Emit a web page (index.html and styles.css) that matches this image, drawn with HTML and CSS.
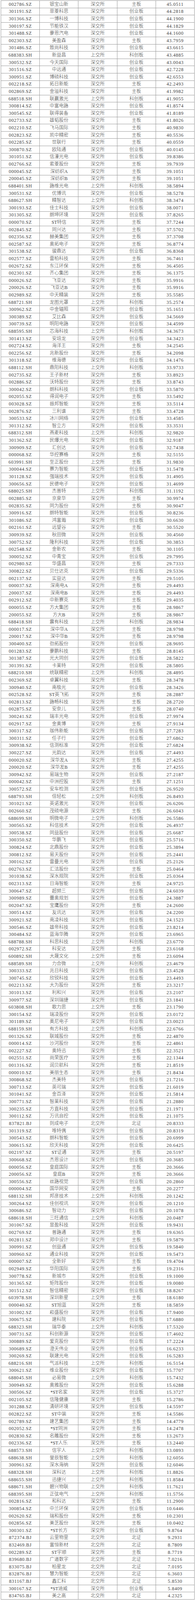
FILE: index.html
```html
<!DOCTYPE html>
<html lang="zh-CN">
<head>
<meta charset="utf-8">
<meta name="viewport" content="width=device-width, initial-scale=1">
<title>股票列表</title>
<link rel="stylesheet" href="styles.css">
</head>
<body>
<div class="sheet">
<div class="row"><span class="cell code">002786.SZ</span><span class="cell name">银宝山新</span><span class="cell cn">深交所</span><span class="cell cn">主板</span><span class="cell num">45.0511</span></div>
<div class="row"><span class="cell code">301191.SZ</span><span class="cell name">菲菱科思</span><span class="cell cn">深交所</span><span class="cell cn">创业板</span><span class="cell num">44.2818</span></div>
<div class="row"><span class="cell code">301366.SZ</span><span class="cell name">一博科技</span><span class="cell cn">深交所</span><span class="cell cn">创业板</span><span class="cell num">44.1900</span></div>
<div class="row"><span class="cell code">300197.SZ</span><span class="cell name">节能铁汉</span><span class="cell cn">深交所</span><span class="cell cn">创业板</span><span class="cell num">44.1829</span></div>
<div class="row"><span class="cell code">301488.SZ</span><span class="cell name">豪恩汽电</span><span class="cell cn">深交所</span><span class="cell cn">创业板</span><span class="cell num">44.1600</span></div>
<div class="row"><span class="cell code">002303.SZ</span><span class="cell name">美盈森</span><span class="cell cn">深交所</span><span class="cell cn">主板</span><span class="cell num">43.7959</span></div>
<div class="row"><span class="cell code">301486.SZ</span><span class="cell name">致尚科技</span><span class="cell cn">深交所</span><span class="cell cn">创业板</span><span class="cell num">43.6615</span></div>
<div class="row"><span class="cell code">688383.SH</span><span class="cell name">新益昌</span><span class="cell cn">上交所</span><span class="cell cn">科创板</span><span class="cell num">43.4885</span></div>
<div class="row"><span class="cell code">300532.SZ</span><span class="cell name">今天国际</span><span class="cell cn">深交所</span><span class="cell cn">创业板</span><span class="cell num">43.0043</span></div>
<div class="row"><span class="cell code">301516.SZ</span><span class="cell name">中远通</span><span class="cell cn">深交所</span><span class="cell cn">创业板</span><span class="cell num">42.7228</span></div>
<div class="row"><span class="cell code">300951.SZ</span><span class="cell name">博硕科技</span><span class="cell cn">深交所</span><span class="cell cn">创业板</span><span class="cell num">42.6553</span></div>
<div class="row"><span class="cell code">002218.SZ</span><span class="cell name">拓日新能</span><span class="cell cn">深交所</span><span class="cell cn">主板</span><span class="cell num">42.2493</span></div>
<div class="row"><span class="cell code">002869.SZ</span><span class="cell name">金溢科技</span><span class="cell cn">深交所</span><span class="cell cn">主板</span><span class="cell num">41.9982</span></div>
<div class="row"><span class="cell code">688518.SH</span><span class="cell name">联赢激光</span><span class="cell cn">上交所</span><span class="cell cn">科创板</span><span class="cell num">41.9055</span></div>
<div class="row"><span class="cell code">300814.SZ</span><span class="cell name">中富电路</span><span class="cell cn">深交所</span><span class="cell cn">创业板</span><span class="cell num">41.8574</span></div>
<div class="row"><span class="cell code">300545.SZ</span><span class="cell name">联得装备</span><span class="cell cn">深交所</span><span class="cell cn">创业板</span><span class="cell num">41.8189</span></div>
<div class="row"><span class="cell code">002733.SZ</span><span class="cell name">雄韬股份</span><span class="cell cn">深交所</span><span class="cell cn">主板</span><span class="cell num">41.8026</span></div>
<div class="row"><span class="cell code">002210.SZ</span><span class="cell name">飞马国际</span><span class="cell cn">深交所</span><span class="cell cn">主板</span><span class="cell num">40.9830</span></div>
<div class="row"><span class="cell code">002823.SZ</span><span class="cell name">凯中精密</span><span class="cell cn">深交所</span><span class="cell cn">主板</span><span class="cell num">40.5536</span></div>
<div class="row"><span class="cell code">002285.SZ</span><span class="cell name">世联行</span><span class="cell cn">深交所</span><span class="cell cn">主板</span><span class="cell num">40.0559</span></div>
<div class="row"><span class="cell code">300870.SZ</span><span class="cell name">欧陆通</span><span class="cell cn">深交所</span><span class="cell cn">创业板</span><span class="cell num">40.0145</span></div>
<div class="row"><span class="cell code">301051.SZ</span><span class="cell name">信濠光电</span><span class="cell cn">深交所</span><span class="cell cn">创业板</span><span class="cell num">39.8386</span></div>
<div class="row"><span class="cell code">002766.SZ</span><span class="cell name">索菱股份</span><span class="cell cn">深交所</span><span class="cell cn">主板</span><span class="cell num">39.7939</span></div>
<div class="row"><span class="cell code">000045.SZ</span><span class="cell name">深纺织A</span><span class="cell cn">深交所</span><span class="cell cn">主板</span><span class="cell num">39.1051</span></div>
<div class="row"><span class="cell code">200045.SZ</span><span class="cell name">深纺织B</span><span class="cell cn">深交所</span><span class="cell cn">主板</span><span class="cell num">39.1051</span></div>
<div class="row"><span class="cell code">688401.SH</span><span class="cell name">路维光电</span><span class="cell cn">上交所</span><span class="cell cn">科创板</span><span class="cell num">38.5894</span></div>
<div class="row"><span class="cell code">300531.SZ</span><span class="cell name">优博讯</span><span class="cell cn">深交所</span><span class="cell cn">创业板</span><span class="cell num">38.5278</span></div>
<div class="row"><span class="cell code">688627.SH</span><span class="cell name">精智达</span><span class="cell cn">上交所</span><span class="cell cn">科创板</span><span class="cell num">38.3474</span></div>
<div class="row"><span class="cell code">300193.SZ</span><span class="cell name">佳士科技</span><span class="cell cn">深交所</span><span class="cell cn">创业板</span><span class="cell num">38.0071</span></div>
<div class="row"><span class="cell code">301305.SZ</span><span class="cell name">朗坤环境</span><span class="cell cn">深交所</span><span class="cell cn">创业板</span><span class="cell num">37.8265</span></div>
<div class="row"><span class="cell code">000070.SZ</span><span class="cell name">ST特信</span><span class="cell cn">深交所</span><span class="cell cn">主板</span><span class="cell num">37.7244</span></div>
<div class="row"><span class="cell code">002845.SZ</span><span class="cell name">同兴达</span><span class="cell cn">深交所</span><span class="cell cn">主板</span><span class="cell num">37.5702</span></div>
<div class="row"><span class="cell code">002356.SZ</span><span class="cell name">赫美集团</span><span class="cell cn">深交所</span><span class="cell cn">主板</span><span class="cell num">37.3708</span></div>
<div class="row"><span class="cell code">002587.SZ</span><span class="cell name">奥拓电子</span><span class="cell cn">深交所</span><span class="cell cn">主板</span><span class="cell num">36.8774</span></div>
<div class="row"><span class="cell code">301538.SZ</span><span class="cell name">骏鼎达</span><span class="cell cn">深交所</span><span class="cell cn">创业板</span><span class="cell num">36.8368</span></div>
<div class="row"><span class="cell code">002577.SZ</span><span class="cell name">雷柏科技</span><span class="cell cn">深交所</span><span class="cell cn">主板</span><span class="cell num">36.7461</span></div>
<div class="row"><span class="cell code">002672.SZ</span><span class="cell name">东江环保</span><span class="cell cn">深交所</span><span class="cell cn">主板</span><span class="cell num">36.4505</span></div>
<div class="row"><span class="cell code">002301.SZ</span><span class="cell name">齐心集团</span><span class="cell cn">深交所</span><span class="cell cn">主板</span><span class="cell num">36.1375</span></div>
<div class="row"><span class="cell code">000026.SZ</span><span class="cell name">飞亚达</span><span class="cell cn">深交所</span><span class="cell cn">主板</span><span class="cell num">35.9916</span></div>
<div class="row"><span class="cell code">200026.SZ</span><span class="cell name">飞亚达B</span><span class="cell cn">深交所</span><span class="cell cn">主板</span><span class="cell num">35.9916</span></div>
<div class="row"><span class="cell code">002989.SZ</span><span class="cell name">中天精装</span><span class="cell cn">深交所</span><span class="cell cn">主板</span><span class="cell num">35.5585</span></div>
<div class="row"><span class="cell code">688721.SH</span><span class="cell name">龙图光罩</span><span class="cell cn">上交所</span><span class="cell cn">科创板</span><span class="cell num">35.2574</span></div>
<div class="row"><span class="cell code">300962.SZ</span><span class="cell name">中金辐照</span><span class="cell cn">深交所</span><span class="cell cn">创业板</span><span class="cell num">35.1651</span></div>
<div class="row"><span class="cell code">300389.SZ</span><span class="cell name">艾比森</span><span class="cell cn">深交所</span><span class="cell cn">创业板</span><span class="cell num">34.5669</span></div>
<div class="row"><span class="cell code">300739.SZ</span><span class="cell name">明阳电路</span><span class="cell cn">深交所</span><span class="cell cn">创业板</span><span class="cell num">34.4599</span></div>
<div class="row"><span class="cell code">688595.SH</span><span class="cell name">芯海科技</span><span class="cell cn">上交所</span><span class="cell cn">科创板</span><span class="cell num">34.3673</span></div>
<div class="row"><span class="cell code">301413.SZ</span><span class="cell name">安培龙</span><span class="cell cn">深交所</span><span class="cell cn">创业板</span><span class="cell num">34.3423</span></div>
<div class="row"><span class="cell code">002724.SZ</span><span class="cell name">海洋王</span><span class="cell cn">深交所</span><span class="cell cn">主板</span><span class="cell num">34.2545</span></div>
<div class="row"><span class="cell code">002256.SZ</span><span class="cell name">兆新股份</span><span class="cell cn">深交所</span><span class="cell cn">主板</span><span class="cell num">34.2098</span></div>
<div class="row"><span class="cell code">301318.SZ</span><span class="cell name">维海德</span><span class="cell cn">深交所</span><span class="cell cn">创业板</span><span class="cell num">34.1476</span></div>
<div class="row"><span class="cell code">688112.SH</span><span class="cell name">鼎阳科技</span><span class="cell cn">上交所</span><span class="cell cn">科创板</span><span class="cell num">33.9733</span></div>
<div class="row"><span class="cell code">002735.SZ</span><span class="cell name">王子新材</span><span class="cell cn">深交所</span><span class="cell cn">主板</span><span class="cell num">33.8923</span></div>
<div class="row"><span class="cell code">002886.SZ</span><span class="cell name">沃特股份</span><span class="cell cn">深交所</span><span class="cell cn">主板</span><span class="cell num">33.8743</span></div>
<div class="row"><span class="cell code">300042.SZ</span><span class="cell name">朗科科技</span><span class="cell cn">深交所</span><span class="cell cn">创业板</span><span class="cell num">33.5870</span></div>
<div class="row"><span class="cell code">002055.SZ</span><span class="cell name">得润电子</span><span class="cell cn">深交所</span><span class="cell cn">主板</span><span class="cell num">33.5492</span></div>
<div class="row"><span class="cell code">003028.SZ</span><span class="cell name">振邦智能</span><span class="cell cn">深交所</span><span class="cell cn">主板</span><span class="cell num">33.5114</span></div>
<div class="row"><span class="cell code">002876.SZ</span><span class="cell name">三利谱</span><span class="cell cn">深交所</span><span class="cell cn">主板</span><span class="cell num">33.4728</span></div>
<div class="row"><span class="cell code">300533.SZ</span><span class="cell name">冰川网络</span><span class="cell cn">深交所</span><span class="cell cn">创业板</span><span class="cell num">33.4585</span></div>
<div class="row"><span class="cell code">301312.SZ</span><span class="cell name">智立方</span><span class="cell cn">深交所</span><span class="cell cn">创业板</span><span class="cell num">33.3531</span></div>
<div class="row"><span class="cell code">688312.SH</span><span class="cell name">燕麦科技</span><span class="cell cn">上交所</span><span class="cell cn">科创板</span><span class="cell num">32.9820</span></div>
<div class="row"><span class="cell code">301362.SZ</span><span class="cell name">民爆光电</span><span class="cell cn">深交所</span><span class="cell cn">创业板</span><span class="cell num">32.9187</span></div>
<div class="row"><span class="cell code">300909.SZ</span><span class="cell name">汇创达</span><span class="cell cn">深交所</span><span class="cell cn">创业板</span><span class="cell num">32.7438</span></div>
<div class="row"><span class="cell code">000068.SZ</span><span class="cell name">华控赛格</span><span class="cell cn">深交所</span><span class="cell cn">主板</span><span class="cell num">32.5155</span></div>
<div class="row"><span class="cell code">603991.SH</span><span class="cell name">至正股份</span><span class="cell cn">上交所</span><span class="cell cn">主板</span><span class="cell num">31.9830</span></div>
<div class="row"><span class="cell code">300044.SZ</span><span class="cell name">赛为智能</span><span class="cell cn">深交所</span><span class="cell cn">创业板</span><span class="cell num">31.5478</span></div>
<div class="row"><span class="cell code">301128.SZ</span><span class="cell name">强瑞技术</span><span class="cell cn">深交所</span><span class="cell cn">创业板</span><span class="cell num">31.4905</span></div>
<div class="row"><span class="cell code">300656.SZ</span><span class="cell name">民德电子</span><span class="cell cn">深交所</span><span class="cell cn">创业板</span><span class="cell num">31.4699</span></div>
<div class="row"><span class="cell code">688025.SH</span><span class="cell name">杰普特</span><span class="cell cn">上交所</span><span class="cell cn">科创板</span><span class="cell num">31.1192</span></div>
<div class="row"><span class="cell code">002885.SZ</span><span class="cell name">京泉华</span><span class="cell cn">深交所</span><span class="cell cn">主板</span><span class="cell num">30.9974</span></div>
<div class="row"><span class="cell code">002835.SZ</span><span class="cell name">同为股份</span><span class="cell cn">深交所</span><span class="cell cn">主板</span><span class="cell num">30.9047</span></div>
<div class="row"><span class="cell code">300916.SZ</span><span class="cell name">朗特智能</span><span class="cell cn">深交所</span><span class="cell cn">创业板</span><span class="cell num">30.8236</span></div>
<div class="row"><span class="cell code">301086.SZ</span><span class="cell name">鸿富瀚</span><span class="cell cn">深交所</span><span class="cell cn">创业板</span><span class="cell num">30.6630</span></div>
<div class="row"><span class="cell code">002161.SZ</span><span class="cell name">远望谷</span><span class="cell cn">深交所</span><span class="cell cn">主板</span><span class="cell num">30.5520</span></div>
<div class="row"><span class="cell code">300939.SZ</span><span class="cell name">秋田微</span><span class="cell cn">深交所</span><span class="cell cn">创业板</span><span class="cell num">30.4560</span></div>
<div class="row"><span class="cell code">300752.SZ</span><span class="cell name">隆利科技</span><span class="cell cn">深交所</span><span class="cell cn">创业板</span><span class="cell num">30.3853</span></div>
<div class="row"><span class="cell code">002548.SZ</span><span class="cell name">金新农</span><span class="cell cn">深交所</span><span class="cell cn">主板</span><span class="cell num">30.1105</span></div>
<div class="row"><span class="cell code">300052.SZ</span><span class="cell name">中青宝</span><span class="cell cn">深交所</span><span class="cell cn">创业板</span><span class="cell num">29.7995</span></div>
<div class="row"><span class="cell code">002980.SZ</span><span class="cell name">华盛昌</span><span class="cell cn">深交所</span><span class="cell cn">主板</span><span class="cell num">29.7333</span></div>
<div class="row"><span class="cell code">300822.SZ</span><span class="cell name">贝仕达克</span><span class="cell cn">深交所</span><span class="cell cn">创业板</span><span class="cell num">29.5336</span></div>
<div class="row"><span class="cell code">002137.SZ</span><span class="cell name">实益达</span><span class="cell cn">深交所</span><span class="cell cn">主板</span><span class="cell num">29.5105</span></div>
<div class="row"><span class="cell code">000037.SZ</span><span class="cell name">深南电A</span><span class="cell cn">深交所</span><span class="cell cn">主板</span><span class="cell num">29.4493</span></div>
<div class="row"><span class="cell code">200037.SZ</span><span class="cell name">深南电B</span><span class="cell cn">深交所</span><span class="cell cn">主板</span><span class="cell num">29.4493</span></div>
<div class="row"><span class="cell code">002912.SZ</span><span class="cell name">中新赛克</span><span class="cell cn">深交所</span><span class="cell cn">主板</span><span class="cell num">29.4035</span></div>
<div class="row"><span class="cell code">000055.SZ</span><span class="cell name">方大集团</span><span class="cell cn">深交所</span><span class="cell cn">主板</span><span class="cell num">28.9867</span></div>
<div class="row"><span class="cell code">200055.SZ</span><span class="cell name">方大B</span><span class="cell cn">深交所</span><span class="cell cn">主板</span><span class="cell num">28.9867</span></div>
<div class="row"><span class="cell code">688418.SH</span><span class="cell name">震有科技</span><span class="cell cn">上交所</span><span class="cell cn">科创板</span><span class="cell num">28.9834</span></div>
<div class="row"><span class="cell code">000017.SZ</span><span class="cell name">深中华A</span><span class="cell cn">深交所</span><span class="cell cn">主板</span><span class="cell num">28.9798</span></div>
<div class="row"><span class="cell code">200017.SZ</span><span class="cell name">深中华B</span><span class="cell cn">深交所</span><span class="cell cn">主板</span><span class="cell num">28.9798</span></div>
<div class="row"><span class="cell code">300400.SZ</span><span class="cell name">劲拓股份</span><span class="cell cn">深交所</span><span class="cell cn">创业板</span><span class="cell num">28.9695</span></div>
<div class="row"><span class="cell code">001283.SZ</span><span class="cell name">豪鹏科技</span><span class="cell cn">深交所</span><span class="cell cn">主板</span><span class="cell num">28.8145</span></div>
<div class="row"><span class="cell code">301387.SZ</span><span class="cell name">光大同创</span><span class="cell cn">深交所</span><span class="cell cn">创业板</span><span class="cell num">28.5822</span></div>
<div class="row"><span class="cell code">301391.SZ</span><span class="cell name">卡莱特</span><span class="cell cn">深交所</span><span class="cell cn">创业板</span><span class="cell num">28.5805</span></div>
<div class="row"><span class="cell code">688210.SH</span><span class="cell name">统联精密</span><span class="cell cn">上交所</span><span class="cell cn">科创板</span><span class="cell num">28.4895</span></div>
<div class="row"><span class="cell code">002369.SZ</span><span class="cell name">卓翼科技</span><span class="cell cn">深交所</span><span class="cell cn">主板</span><span class="cell num">28.3478</span></div>
<div class="row"><span class="cell code">300940.SZ</span><span class="cell name">南极光</span><span class="cell cn">深交所</span><span class="cell cn">创业板</span><span class="cell num">28.3426</span></div>
<div class="row"><span class="cell code">002528.SZ</span><span class="cell name">ST英飞拓</span><span class="cell cn">深交所</span><span class="cell cn">主板</span><span class="cell num">28.2887</span></div>
<div class="row"><span class="cell code">002813.SZ</span><span class="cell name">路畅科技</span><span class="cell cn">深交所</span><span class="cell cn">主板</span><span class="cell num">28.2720</span></div>
<div class="row"><span class="cell code">002875.SZ</span><span class="cell name">安奈儿</span><span class="cell cn">深交所</span><span class="cell cn">主板</span><span class="cell num">28.0740</span></div>
<div class="row"><span class="cell code">300241.SZ</span><span class="cell name">瑞丰光电</span><span class="cell cn">深交所</span><span class="cell cn">创业板</span><span class="cell num">27.9974</span></div>
<div class="row"><span class="cell code">002917.SZ</span><span class="cell name">金奥博</span><span class="cell cn">深交所</span><span class="cell cn">主板</span><span class="cell num">27.9134</span></div>
<div class="row"><span class="cell code">300317.SZ</span><span class="cell name">珈伟新能</span><span class="cell cn">深交所</span><span class="cell cn">创业板</span><span class="cell num">27.7283</span></div>
<div class="row"><span class="cell code">300311.SZ</span><span class="cell name">任子行</span><span class="cell cn">深交所</span><span class="cell cn">创业板</span><span class="cell num">27.6862</span></div>
<div class="row"><span class="cell code">300938.SZ</span><span class="cell name">信测标准</span><span class="cell cn">深交所</span><span class="cell cn">创业板</span><span class="cell num">27.6824</span></div>
<div class="row"><span class="cell code">300227.SZ</span><span class="cell name">光韵达</span><span class="cell cn">深交所</span><span class="cell cn">创业板</span><span class="cell num">27.4493</span></div>
<div class="row"><span class="cell code">000020.SZ</span><span class="cell name">深华发A</span><span class="cell cn">深交所</span><span class="cell cn">主板</span><span class="cell num">27.4255</span></div>
<div class="row"><span class="cell code">200020.SZ</span><span class="cell name">深华发B</span><span class="cell cn">深交所</span><span class="cell cn">主板</span><span class="cell num">27.4255</span></div>
<div class="row"><span class="cell code">300942.SZ</span><span class="cell name">易瑞生物</span><span class="cell cn">深交所</span><span class="cell cn">创业板</span><span class="cell num">27.2187</span></div>
<div class="row"><span class="cell code">000042.SZ</span><span class="cell name">中洲控股</span><span class="cell cn">深交所</span><span class="cell cn">主板</span><span class="cell num">27.1251</span></div>
<div class="row"><span class="cell code">300572.SZ</span><span class="cell name">安车检测</span><span class="cell cn">深交所</span><span class="cell cn">创业板</span><span class="cell num">26.9520</span></div>
<div class="row"><span class="cell code">688793.SH</span><span class="cell name">倍轻松</span><span class="cell cn">上交所</span><span class="cell cn">科创板</span><span class="cell num">26.8493</span></div>
<div class="row"><span class="cell code">301021.SZ</span><span class="cell name">英诺激光</span><span class="cell cn">深交所</span><span class="cell cn">创业板</span><span class="cell num">26.6206</span></div>
<div class="row"><span class="cell code">002660.SZ</span><span class="cell name">茂硕电源</span><span class="cell cn">深交所</span><span class="cell cn">主板</span><span class="cell num">26.6043</span></div>
<div class="row"><span class="cell code">688699.SH</span><span class="cell name">明微电子</span><span class="cell cn">上交所</span><span class="cell cn">科创板</span><span class="cell num">26.5586</span></div>
<div class="row"><span class="cell code">300565.SZ</span><span class="cell name">科信技术</span><span class="cell cn">深交所</span><span class="cell cn">创业板</span><span class="cell num">26.4937</span></div>
<div class="row"><span class="cell code">300538.SZ</span><span class="cell name">同益股份</span><span class="cell cn">深交所</span><span class="cell cn">创业板</span><span class="cell num">25.6687</span></div>
<div class="row"><span class="cell code">300350.SZ</span><span class="cell name">华鹏飞</span><span class="cell cn">深交所</span><span class="cell cn">创业板</span><span class="cell num">25.5716</span></div>
<div class="row"><span class="cell code">300824.SZ</span><span class="cell name">北鼎股份</span><span class="cell cn">深交所</span><span class="cell cn">创业板</span><span class="cell num">25.3894</span></div>
<div class="row"><span class="cell code">300812.SZ</span><span class="cell name">易天股份</span><span class="cell cn">深交所</span><span class="cell cn">创业板</span><span class="cell num">25.2441</span></div>
<div class="row"><span class="cell code">300162.SZ</span><span class="cell name">雷曼光电</span><span class="cell cn">深交所</span><span class="cell cn">创业板</span><span class="cell num">25.2126</span></div>
<div class="row"><span class="cell code">002763.SZ</span><span class="cell name">汇洁股份</span><span class="cell cn">深交所</span><span class="cell cn">主板</span><span class="cell num">25.0464</span></div>
<div class="row"><span class="cell code">301038.SZ</span><span class="cell name">深水规院</span><span class="cell cn">深交所</span><span class="cell cn">创业板</span><span class="cell num">25.0364</span></div>
<div class="row"><span class="cell code">002313.SZ</span><span class="cell name">日海智能</span><span class="cell cn">深交所</span><span class="cell cn">主板</span><span class="cell num">24.9725</span></div>
<div class="row"><span class="cell code">300647.SZ</span><span class="cell name">超频三</span><span class="cell cn">深交所</span><span class="cell cn">创业板</span><span class="cell num">24.6039</span></div>
<div class="row"><span class="cell code">300989.SZ</span><span class="cell name">蕾奥规划</span><span class="cell cn">深交所</span><span class="cell cn">创业板</span><span class="cell num">24.3887</span></div>
<div class="row"><span class="cell code">002047.SZ</span><span class="cell name">宝鹰股份</span><span class="cell cn">深交所</span><span class="cell cn">主板</span><span class="cell num">24.2600</span></div>
<div class="row"><span class="cell code">300514.SZ</span><span class="cell name">友讯达</span><span class="cell cn">深交所</span><span class="cell cn">创业板</span><span class="cell num">24.2200</span></div>
<div class="row"><span class="cell code">300921.SZ</span><span class="cell name">南凌科技</span><span class="cell cn">深交所</span><span class="cell cn">创业板</span><span class="cell num">24.1523</span></div>
<div class="row"><span class="cell code">300546.SZ</span><span class="cell name">雄帝科技</span><span class="cell cn">深交所</span><span class="cell cn">创业板</span><span class="cell num">23.8214</span></div>
<div class="row"><span class="cell code">300484.SZ</span><span class="cell name">蓝海华腾</span><span class="cell cn">深交所</span><span class="cell cn">创业板</span><span class="cell num">23.6965</span></div>
<div class="row"><span class="cell code">688788.SH</span><span class="cell name">科思科技</span><span class="cell cn">上交所</span><span class="cell cn">科创板</span><span class="cell num">23.6770</span></div>
<div class="row"><span class="cell code">002972.SZ</span><span class="cell name">科安达</span><span class="cell cn">深交所</span><span class="cell cn">主板</span><span class="cell num">23.6168</span></div>
<div class="row"><span class="cell code">600892.SH</span><span class="cell name">大晟文化</span><span class="cell cn">上交所</span><span class="cell cn">主板</span><span class="cell num">23.6094</span></div>
<div class="row"><span class="cell code">688589.SH</span><span class="cell name">力合微</span><span class="cell cn">上交所</span><span class="cell cn">科创板</span><span class="cell num">23.4679</span></div>
<div class="row"><span class="cell code">300333.SZ</span><span class="cell name">兆日科技</span><span class="cell cn">深交所</span><span class="cell cn">创业板</span><span class="cell num">23.4528</span></div>
<div class="row"><span class="cell code">300745.SZ</span><span class="cell name">欣锐科技</span><span class="cell cn">深交所</span><span class="cell cn">创业板</span><span class="cell num">23.4493</span></div>
<div class="row"><span class="cell code">002213.SZ</span><span class="cell name">大为股份</span><span class="cell cn">深交所</span><span class="cell cn">主板</span><span class="cell num">23.3217</span></div>
<div class="row"><span class="cell code">301013.SZ</span><span class="cell name">利和兴</span><span class="cell cn">深交所</span><span class="cell cn">创业板</span><span class="cell num">23.2107</span></div>
<div class="row"><span class="cell code">300977.SZ</span><span class="cell name">深圳瑞捷</span><span class="cell cn">深交所</span><span class="cell cn">创业板</span><span class="cell num">23.1841</span></div>
<div class="row"><span class="cell code">603808.SH</span><span class="cell name">歌力思</span><span class="cell cn">上交所</span><span class="cell cn">主板</span><span class="cell num">23.1790</span></div>
<div class="row"><span class="cell code">300154.SZ</span><span class="cell name">瑞凌股份</span><span class="cell cn">深交所</span><span class="cell cn">创业板</span><span class="cell num">23.0172</span></div>
<div class="row"><span class="cell code">301189.SZ</span><span class="cell name">奥尼电子</span><span class="cell cn">深交所</span><span class="cell cn">创业板</span><span class="cell num">23.0023</span></div>
<div class="row"><span class="cell code">688159.SH</span><span class="cell name">有方科技</span><span class="cell cn">上交所</span><span class="cell cn">科创板</span><span class="cell num">22.6766</span></div>
<div class="row"><span class="cell code">001326.SZ</span><span class="cell name">联域股份</span><span class="cell cn">深交所</span><span class="cell cn">主板</span><span class="cell num">22.4870</span></div>
<div class="row"><span class="cell code">000014.SZ</span><span class="cell name">沙河股份</span><span class="cell cn">深交所</span><span class="cell cn">主板</span><span class="cell num">22.4861</span></div>
<div class="row"><span class="cell code">002227.SZ</span><span class="cell name">奥特迅</span><span class="cell cn">深交所</span><span class="cell cn">主板</span><span class="cell num">22.3521</span></div>
<div class="row"><span class="cell code">002551.SZ</span><span class="cell name">尚荣医疗</span><span class="cell cn">深交所</span><span class="cell cn">主板</span><span class="cell num">22.1344</span></div>
<div class="row"><span class="cell code">001316.SZ</span><span class="cell name">润贝航科</span><span class="cell cn">深交所</span><span class="cell cn">主板</span><span class="cell num">21.8519</span></div>
<div class="row"><span class="cell code">000010.SZ</span><span class="cell name">美丽生态</span><span class="cell cn">深交所</span><span class="cell cn">主板</span><span class="cell num">21.8434</span></div>
<div class="row"><span class="cell code">300868.SZ</span><span class="cell name">杰美特</span><span class="cell cn">深交所</span><span class="cell cn">创业板</span><span class="cell num">21.7216</span></div>
<div class="row"><span class="cell code">300713.SZ</span><span class="cell name">英可瑞</span><span class="cell cn">深交所</span><span class="cell cn">创业板</span><span class="cell num">21.6019</span></div>
<div class="row"><span class="cell code">301041.SZ</span><span class="cell name">金百泽</span><span class="cell cn">深交所</span><span class="cell cn">创业板</span><span class="cell num">21.5814</span></div>
<div class="row"><span class="cell code">300771.SZ</span><span class="cell name">智莱科技</span><span class="cell cn">深交所</span><span class="cell cn">创业板</span><span class="cell num">21.2880</span></div>
<div class="row"><span class="cell code">300235.SZ</span><span class="cell name">方直科技</span><span class="cell cn">深交所</span><span class="cell cn">创业板</span><span class="cell num">21.1971</span></div>
<div class="row"><span class="cell code">300112.SZ</span><span class="cell name">万讯自控</span><span class="cell cn">深交所</span><span class="cell cn">创业板</span><span class="cell num">21.1075</span></div>
<div class="row"><span class="cell code">837821.BJ</span><span class="cell name">则成电子</span><span class="cell cn">北交所</span><span class="cell cn">北证</span><span class="cell num">20.8333</span></div>
<div class="row"><span class="cell code">301319.SZ</span><span class="cell name">唯特偶</span><span class="cell cn">深交所</span><span class="cell cn">创业板</span><span class="cell num">20.8319</span></div>
<div class="row"><span class="cell code">300543.SZ</span><span class="cell name">朗科智能</span><span class="cell cn">深交所</span><span class="cell cn">创业板</span><span class="cell num">20.6999</span></div>
<div class="row"><span class="cell code">300615.SZ</span><span class="cell name">欣天科技</span><span class="cell cn">深交所</span><span class="cell cn">创业板</span><span class="cell num">20.6425</span></div>
<div class="row"><span class="cell code">002197.SZ</span><span class="cell name">ST证通</span><span class="cell cn">深交所</span><span class="cell cn">主板</span><span class="cell num">20.5197</span></div>
<div class="row"><span class="cell code">300668.SZ</span><span class="cell name">杰恩设计</span><span class="cell cn">深交所</span><span class="cell cn">创业板</span><span class="cell num">20.3685</span></div>
<div class="row"><span class="cell code">000056.SZ</span><span class="cell name">皇庭国际</span><span class="cell cn">深交所</span><span class="cell cn">主板</span><span class="cell num">20.3666</span></div>
<div class="row"><span class="cell code">200056.SZ</span><span class="cell name">皇庭B</span><span class="cell cn">深交所</span><span class="cell cn">主板</span><span class="cell num">20.3666</span></div>
<div class="row"><span class="cell code">300556.SZ</span><span class="cell name">丝路视觉</span><span class="cell cn">深交所</span><span class="cell cn">创业板</span><span class="cell num">20.2860</span></div>
<div class="row"><span class="cell code">000004.SZ</span><span class="cell name">国华网安</span><span class="cell cn">深交所</span><span class="cell cn">主板</span><span class="cell num">20.2277</span></div>
<div class="row"><span class="cell code">688132.SH</span><span class="cell name">邦彦技术</span><span class="cell cn">上交所</span><span class="cell cn">科创板</span><span class="cell num">20.1242</span></div>
<div class="row"><span class="cell code">300264.SZ</span><span class="cell name">佳创视讯</span><span class="cell cn">深交所</span><span class="cell cn">创业板</span><span class="cell num">20.1210</span></div>
<div class="row"><span class="cell code">300686.SZ</span><span class="cell name">智动力</span><span class="cell cn">深交所</span><span class="cell cn">创业板</span><span class="cell num">20.1078</span></div>
<div class="row"><span class="cell code">688618.SH</span><span class="cell name">三旺通信</span><span class="cell cn">上交所</span><span class="cell cn">科创板</span><span class="cell num">20.0487</span></div>
<div class="row"><span class="cell code">301067.SZ</span><span class="cell name">显盈科技</span><span class="cell cn">深交所</span><span class="cell cn">创业板</span><span class="cell num">19.9431</span></div>
<div class="row"><span class="cell code">002769.SZ</span><span class="cell name">普路通</span><span class="cell cn">深交所</span><span class="cell cn">主板</span><span class="cell num">19.6365</span></div>
<div class="row"><span class="cell code">002811.SZ</span><span class="cell name">郑中设计</span><span class="cell cn">深交所</span><span class="cell cn">主板</span><span class="cell num">19.5879</span></div>
<div class="row"><span class="cell code">300991.SZ</span><span class="cell name">创益通</span><span class="cell cn">深交所</span><span class="cell cn">创业板</span><span class="cell num">19.5840</span></div>
<div class="row"><span class="cell code">300960.SZ</span><span class="cell name">通业科技</span><span class="cell cn">深交所</span><span class="cell cn">创业板</span><span class="cell num">19.5473</span></div>
<div class="row"><span class="cell code">000007.SZ</span><span class="cell name">全新好</span><span class="cell cn">深交所</span><span class="cell cn">主板</span><span class="cell num">19.4704</span></div>
<div class="row"><span class="cell code">002949.SZ</span><span class="cell name">华阳国际</span><span class="cell cn">深交所</span><span class="cell cn">主板</span><span class="cell num">19.2316</span></div>
<div class="row"><span class="cell code">300778.SZ</span><span class="cell name">新城市</span><span class="cell cn">深交所</span><span class="cell cn">创业板</span><span class="cell num">19.1000</span></div>
<div class="row"><span class="cell code">301365.SZ</span><span class="cell name">矩阵股份</span><span class="cell cn">深交所</span><span class="cell cn">创业板</span><span class="cell num">19.0080</span></div>
<div class="row"><span class="cell code">301512.SZ</span><span class="cell name">智信精密</span><span class="cell cn">深交所</span><span class="cell cn">创业板</span><span class="cell num">18.8267</span></div>
<div class="row"><span class="cell code">603978.SH</span><span class="cell name">深圳新星</span><span class="cell cn">上交所</span><span class="cell cn">主板</span><span class="cell num">18.6180</span></div>
<div class="row"><span class="cell code">000040.SZ</span><span class="cell name">ST旭蓝</span><span class="cell cn">深交所</span><span class="cell cn">主板</span><span class="cell num">18.5859</span></div>
<div class="row"><span class="cell code">301002.SZ</span><span class="cell name">崧盛股份</span><span class="cell cn">深交所</span><span class="cell cn">创业板</span><span class="cell num">17.9400</span></div>
<div class="row"><span class="cell code">300675.SZ</span><span class="cell name">建科院</span><span class="cell cn">深交所</span><span class="cell cn">创业板</span><span class="cell num">17.6880</span></div>
<div class="row"><span class="cell code">688323.SH</span><span class="cell name">瑞华泰</span><span class="cell cn">上交所</span><span class="cell cn">科创板</span><span class="cell num">17.5320</span></div>
<div class="row"><span class="cell code">300731.SZ</span><span class="cell name">科创新源</span><span class="cell cn">深交所</span><span class="cell cn">创业板</span><span class="cell num">17.4602</span></div>
<div class="row"><span class="cell code">300889.SZ</span><span class="cell name">爱克股份</span><span class="cell cn">深交所</span><span class="cell cn">创业板</span><span class="cell num">17.2224</span></div>
<div class="row"><span class="cell code">300689.SZ</span><span class="cell name">澄天伟业</span><span class="cell cn">深交所</span><span class="cell cn">创业板</span><span class="cell num">16.6233</span></div>
<div class="row"><span class="cell code">300269.SZ</span><span class="cell name">联建光电</span><span class="cell cn">深交所</span><span class="cell cn">创业板</span><span class="cell num">16.5283</span></div>
<div class="row"><span class="cell code">688216.SH</span><span class="cell name">气派科技</span><span class="cell cn">上交所</span><span class="cell cn">科创板</span><span class="cell num">16.5154</span></div>
<div class="row"><span class="cell code">300621.SZ</span><span class="cell name">维业股份</span><span class="cell cn">深交所</span><span class="cell cn">创业板</span><span class="cell num">15.7707</span></div>
<div class="row"><span class="cell code">688045.SH</span><span class="cell name">必易微</span><span class="cell cn">上交所</span><span class="cell cn">科创板</span><span class="cell num">15.7432</span></div>
<div class="row"><span class="cell code">300949.SZ</span><span class="cell name">奥雅股份</span><span class="cell cn">深交所</span><span class="cell cn">创业板</span><span class="cell num">15.6288</span></div>
<div class="row"><span class="cell code">300506.SZ</span><span class="cell name">*ST名家</span><span class="cell cn">深交所</span><span class="cell cn">创业板</span><span class="cell num">15.3727</span></div>
<div class="row"><span class="cell code">002105.SZ</span><span class="cell name">信隆健康</span><span class="cell cn">深交所</span><span class="cell cn">主板</span><span class="cell num">15.2786</span></div>
<div class="row"><span class="cell code">301288.SZ</span><span class="cell name">清研环境</span><span class="cell cn">深交所</span><span class="cell cn">创业板</span><span class="cell num">14.5597</span></div>
<div class="row"><span class="cell code">002822.SZ</span><span class="cell name">ST中装</span><span class="cell cn">深交所</span><span class="cell cn">主板</span><span class="cell num">14.5586</span></div>
<div class="row"><span class="cell code">002789.SZ</span><span class="cell name">建艺集团</span><span class="cell cn">深交所</span><span class="cell cn">主板</span><span class="cell num">14.4779</span></div>
<div class="row"><span class="cell code">002052.SZ</span><span class="cell name">*ST同洲</span><span class="cell cn">深交所</span><span class="cell cn">主板</span><span class="cell num">14.2478</span></div>
<div class="row"><span class="cell code">002830.SZ</span><span class="cell name">名雕股份</span><span class="cell cn">深交所</span><span class="cell cn">主板</span><span class="cell num">13.2673</span></div>
<div class="row"><span class="cell code">002336.SZ</span><span class="cell name">*ST人乐</span><span class="cell cn">深交所</span><span class="cell cn">主板</span><span class="cell num">13.2440</span></div>
<div class="row"><span class="cell code">688573.SH</span><span class="cell name">信宇人</span><span class="cell cn">上交所</span><span class="cell cn">科创板</span><span class="cell num">13.0893</span></div>
<div class="row"><span class="cell code">688638.SH</span><span class="cell name">誉辰智能</span><span class="cell cn">上交所</span><span class="cell cn">科创板</span><span class="cell num">12.6056</span></div>
<div class="row"><span class="cell code">300961.SZ</span><span class="cell name">深水海纳</span><span class="cell cn">深交所</span><span class="cell cn">创业板</span><span class="cell num">12.6046</span></div>
<div class="row"><span class="cell code">688328.SH</span><span class="cell name">深科达</span><span class="cell cn">上交所</span><span class="cell cn">科创板</span><span class="cell num">11.8826</span></div>
<div class="row"><span class="cell code">688655.SH</span><span class="cell name">迅捷兴</span><span class="cell cn">上交所</span><span class="cell cn">科创板</span><span class="cell num">11.8584</span></div>
<div class="row"><span class="cell code">688671.SH</span><span class="cell name">碧兴物联</span><span class="cell cn">上交所</span><span class="cell cn">科创板</span><span class="cell num">11.7621</span></div>
<div class="row"><span class="cell code">688395.SH</span><span class="cell name">正弦电气</span><span class="cell cn">上交所</span><span class="cell cn">科创板</span><span class="cell num">11.5756</span></div>
<div class="row"><span class="cell code">002816.SZ</span><span class="cell name">和科达</span><span class="cell cn">深交所</span><span class="cell cn">主板</span><span class="cell num">11.2900</span></div>
<div class="row"><span class="cell code">300854.SZ</span><span class="cell name">中兰环保</span><span class="cell cn">深交所</span><span class="cell cn">创业板</span><span class="cell num">10.6446</span></div>
<div class="row"><span class="cell code">002620.SZ</span><span class="cell name">瑞和股份</span><span class="cell cn">深交所</span><span class="cell cn">主板</span><span class="cell num">10.2301</span></div>
<div class="row"><span class="cell code">002856.SZ</span><span class="cell name">美芝股份</span><span class="cell cn">深交所</span><span class="cell cn">主板</span><span class="cell num">10.0402</span></div>
<div class="row"><span class="cell code">300301.SZ</span><span class="cell name">*ST长方</span><span class="cell cn">深交所</span><span class="cell cn">创业板</span><span class="cell num">9.8764</span></div>
<div class="row"><span class="cell code">872374.BJ</span><span class="cell name">云里物里</span><span class="cell cn">北交所</span><span class="cell cn">北证</span><span class="cell num">9.2931</span></div>
<div class="row"><span class="cell code">832469.BJ</span><span class="cell name">富恒新材</span><span class="cell cn">北交所</span><span class="cell cn">北证</span><span class="cell num">8.7809</span></div>
<div class="row"><span class="cell code">002289.SZ</span><span class="cell name">ST宇顺</span><span class="cell cn">深交所</span><span class="cell cn">主板</span><span class="cell num">8.7719</span></div>
<div class="row"><span class="cell code">839680.BJ</span><span class="cell name">广道数字</span><span class="cell cn">北交所</span><span class="cell cn">北证</span><span class="cell num">7.0216</span></div>
<div class="row"><span class="cell code">833075.BJ</span><span class="cell name">柏星龙</span><span class="cell cn">北交所</span><span class="cell cn">北证</span><span class="cell num">7.0195</span></div>
<div class="row"><span class="cell code">832876.BJ</span><span class="cell name">慧为智能</span><span class="cell cn">北交所</span><span class="cell cn">北证</span><span class="cell num">6.3603</span></div>
<div class="row"><span class="cell code">831167.BJ</span><span class="cell name">鑫汇科</span><span class="cell cn">北交所</span><span class="cell cn">北证</span><span class="cell num">5.8530</span></div>
<div class="row"><span class="cell code">300167.SZ</span><span class="cell name">*ST迪威</span><span class="cell cn">深交所</span><span class="cell cn">创业板</span><span class="cell num">5.8409</span></div>
<div class="row"><span class="cell code">834765.BJ</span><span class="cell name">美之高</span><span class="cell cn">北交所</span><span class="cell cn">北证</span><span class="cell num">4.2325</span></div>
</div>
</body>
</html>
```
FILE: styles.css
```css
html, body {
  margin: 0;
  padding: 0;
  background: #ffffff;
}

/* Spreadsheet-like sheet: 220 equal rows filling the frame */
.sheet {
  display: grid;
  grid-template-rows: repeat(220, minmax(0, 1fr));
  box-sizing: border-box;
  height: calc(100vh - 2px);
  width: calc(100% - 3px);
  margin: 1px 0 0 2px;
  border-top: 1px solid #9a9a9a;
  border-left: 1px solid #9a9a9a;
  overflow: hidden;
  font-family: "Liberation Serif", "Noto Sans CJK SC", serif;
  font-size: 2.4vw;
  line-height: 1;
  color: #3d3d3d;
}

.row {
  display: grid;
  grid-template-columns: repeat(5, minmax(0, 1fr));
  min-height: 0;
  overflow: hidden;
}

.cell {
  display: flex;
  align-items: center;
  justify-content: center;
  box-sizing: border-box;
  min-width: 0;
  min-height: 0;
  border-right: 1px solid #9a9a9a;
  border-bottom: 1px solid #9a9a9a;
  white-space: nowrap;
  overflow: hidden;
}

.code,
.num {
  letter-spacing: 0.14vw;
}

.name,
.cn {
  font-weight: 300;
}
```
